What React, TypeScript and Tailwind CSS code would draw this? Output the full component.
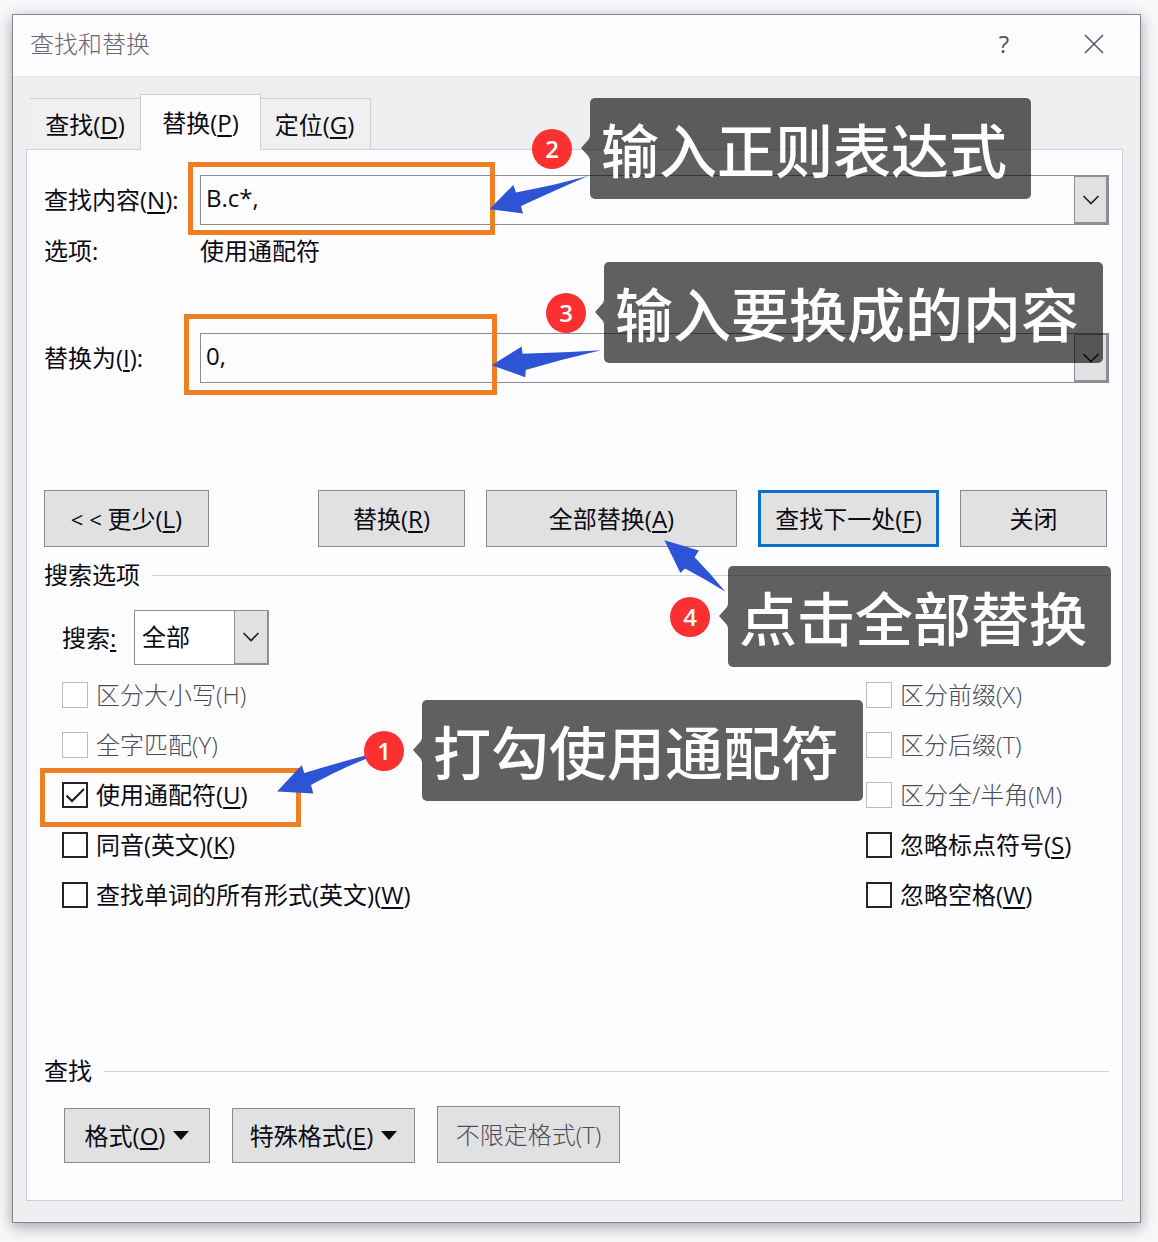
import { useState, type ReactNode } from "react";

function Key({ children }: { children: string }) {
  return (
    <>
      (<span className="underline decoration-2 underline-offset-[3px]">{children}</span>)
    </>
  );
}

function Chevron() {
  return (
    <svg viewBox="0 0 18 10" className="h-[10px] w-[18px]" fill="none" stroke="#222" strokeWidth="1.7">
      <path d="M1.5 1 9 8.5 16.5 1" />
    </svg>
  );
}

function Combo({ id, value }: { id: string; value: string }) {
  const [text, setText] = useState(value);
  return (
    <div className="flex h-[50px] w-full border border-[#8b8a97]">
      <input
        id={id}
        value={text}
        onChange={(e) => setText(e.target.value)}
        className="min-w-0 flex-1 bg-transparent pb-1 pl-[5px] text-[24px] outline-none"
      />
      <button
        type="button"
        aria-label="展开"
        className="flex w-[34px] items-center justify-center border border-r-2 border-b-2 border-[#8b8f98] bg-[#e1e1e2]"
      >
        <Chevron />
      </button>
    </div>
  );
}

function PushButton({ className, children, disabled }: { className: string; children: ReactNode; disabled?: boolean }) {
  return (
    <button
      type="button"
      disabled={disabled}
      className={`flex items-center justify-center gap-2 whitespace-pre bg-[#e1e1e2] disabled:font-light disabled:text-[#4e4a56] ${className}`}
    >
      {children}
    </button>
  );
}

function DownTriangle() {
  return (
    <svg viewBox="0 0 16 9" className="h-[9px] w-4">
      <path d="M0 0H16L8 9Z" fill="#0c0b14" />
    </svg>
  );
}

function Check({
  id,
  children,
  checked = false,
  disabled = false,
}: {
  id: string;
  children: ReactNode;
  checked?: boolean;
  disabled?: boolean;
}) {
  const [on, setOn] = useState(checked);
  return (
    <div className="flex h-[50px] items-center gap-2">
      <span className="relative flex">
        <input
          id={id}
          type="checkbox"
          checked={on}
          disabled={disabled}
          onChange={() => setOn(!on)}
          className="size-[26px] appearance-none border-2 border-[#25242c] bg-white disabled:border disabled:border-[#bcbac2]"
        />
        {on && (
          <svg
            viewBox="0 0 26 26"
            className="pointer-events-none absolute inset-0"
            fill="none"
            stroke="#1a1a22"
            strokeWidth="2"
          >
            <path d="M4.5 13.5 10 19 22 7" />
          </svg>
        )}
      </span>
      <label htmlFor={id} className={disabled ? "font-light whitespace-nowrap text-[#4e4a56]" : "whitespace-nowrap"}>
        {children}
      </label>
    </div>
  );
}

function GroupTitle({ className, children }: { className: string; children: string }) {
  return (
    <div className={`flex items-center gap-3 ${className}`}>
      <h2>{children}</h2>
      <span className="h-px flex-1 bg-[#cfd1dc]" />
    </div>
  );
}

function Note({ step, className, children }: { step: number; className: string; children: string }) {
  return (
    <div className={`pointer-events-none absolute z-20 flex w-max items-center gap-[18px] ${className}`}>
      <span className="flex size-10 items-center justify-center rounded-full bg-[#fb3030] text-[24px] leading-none font-semibold text-white">
        {step}
      </span>
      <span className="relative flex h-[101px] items-center rounded-[5px] bg-black/62 pt-1 pr-6 pl-[11px] text-[58px] leading-none font-medium whitespace-nowrap text-white">
        <svg viewBox="0 0 9 24" className="absolute top-[38px] -left-[9px] h-6 w-[9px]">
          <path d="M9 0 8 3 0 12 8 21 9 24Z" fill="#000" fillOpacity="0.62" />
        </svg>
        {children}
      </span>
    </div>
  );
}

function Frame({ className }: { className: string }) {
  return <span className={`pointer-events-none absolute z-10 border-[5px] border-[#ee7f24] ${className}`} />;
}

function Arrow({ className, box, d }: { className: string; box: string; d: string }) {
  return (
    <svg viewBox={box} className={`pointer-events-none absolute z-20 ${className}`}>
      <path d={d} fill="#2e54d6" />
    </svg>
  );
}

export default function App() {
  return (
    <main className="min-h-screen overflow-hidden bg-[#f8f8fa] pt-[14px] pr-[17px] pb-[18px] pl-3 font-['Open_Sans','Noto_Sans_CJK_SC',sans-serif] text-[24px] leading-7 text-[#0c0b14]">
      <section className="border border-[#85838b] bg-[#eeeff1] shadow-[0_4px_14px_rgba(0,0,0,0.35)]">
        <header className="flex h-[62px] items-center border-b border-[#e4e8ee] bg-[#fdfdff] pr-9 pb-[3px] pl-[17px] text-[#6c6672]">
          <h1 className="font-light">查找和替换</h1>
          <button type="button" aria-label="帮助" className="ml-auto w-5 text-center text-[#55505c]">
            ?
          </button>
          <button type="button" aria-label="关闭窗口" className="ml-[70px]">
            <svg viewBox="0 0 20 20" className="size-5" stroke="#55505c" strokeWidth="1.5">
              <path d="M1 1 19 19M19 1 1 19" />
            </svg>
          </button>
        </header>

        <div className="pt-[17px] pr-[17px] pb-[21px] pl-[13px]">
          <div role="tablist" className="flex items-end">
            <button
              type="button"
              role="tab"
              aria-selected="false"
              className="ml-1 h-[51px] w-[110px] border-t border-[#cdd0d2] bg-[#f0f0f1] pt-[2px] text-center"
            >
              查找<Key>D</Key>
            </button>
            <button
              type="button"
              role="tab"
              aria-selected="true"
              className="relative z-10 -mb-px h-[56px] w-[121px] border border-b-0 border-[#cdd0d2] bg-[#fdfdff] text-center"
            >
              替换<Key>P</Key>
            </button>
            <button
              type="button"
              role="tab"
              aria-selected="false"
              className="h-[51px] w-[110px] border-t border-r border-[#cdd0d2] bg-[#f0f0f1] pt-[2px] pr-[2px] text-center"
            >
              定位<Key>G</Key>
            </button>
          </div>

          <form
            className="border border-[#cdd0d8] bg-[#fdfdff] pt-[25px] pr-[13px] pb-[37px] pl-[17px]"
            onSubmit={(e) => e.preventDefault()}
          >
            <div className="relative grid grid-cols-[156px_1fr] items-center">
              <label htmlFor="find">
                查找内容<Key>N</Key>:
              </label>
              <Combo id="find" value="B.c*," />
              <Frame className="-top-[13px] left-[144px] h-[73px] w-[307px]" />
              <Arrow
                className="top-0 left-[445px] h-10 w-[100px]"
                box="489 175 100 40"
                d="M489.5 209.3 513.3 185 516 192.5Q552 186 588 176 556 190 521 206L523 213.5Z"
              />
              <Note step={2} className="-top-[77px] left-[488px]">
                输入正则表达式
              </Note>
            </div>

            <div className="mt-3 grid grid-cols-[156px_1fr]">
              <span>选项:</span>
              <span>使用通配符</span>
            </div>

            <div className="relative mt-[68px] grid grid-cols-[156px_1fr] items-center">
              <label htmlFor="replace">
                替换为<Key>I</Key>:
              </label>
              <Combo id="replace" value="0," />
              <Frame className="-top-[19px] left-[140px] h-[81px] w-[313px]" />
              <Arrow
                className="top-3 left-[447px] h-[34px] w-[112px]"
                box="491 345 112 34"
                d="M491.7 365.3 521.7 346.5 522.5 353.7Q562 353 601 350.3 563 359 525.7 370L525.3 377.3Z"
              />
              <Note step={3} className="-top-[71px] left-[502px]">
                输入要换成的内容
              </Note>
            </div>

            <div className="mt-[107px] flex gap-[21px] pr-[2px]">
              <PushButton className="mr-auto h-[57px] w-[165px] border border-[#8b8a94]">
                <span>
                  <span className="text-[22px] leading-none">{"< < "}</span>更少<Key>L</Key>
                </span>
              </PushButton>
              <PushButton className="h-[57px] w-[147px] border border-[#8b8a94]">
                <span>
                  替换<Key>R</Key>
                </span>
              </PushButton>
              <div className="relative">
                <PushButton className="h-[57px] w-[251px] border border-[#8b8a94]">
                  <span>
                    全部替换<Key>A</Key>
                  </span>
                </PushButton>
                <Arrow
                  className="top-[49px] left-[177px] h-[54px] w-[64px]"
                  box="663 539 64 54"
                  d="M664.4 540.3 699 550.5 694.6 557.3Q711 574 725.4 591.7 705 579 685 568.5L680.4 573Z"
                />
                <Note step={4} className="top-[76px] left-[184px]">
                  点击全部替换
                </Note>
              </div>
              <PushButton className="h-[57px] w-[181px] border-[3px] border-[#0b6fd0]">
                <span>
                  查找下一处<Key>F</Key>
                </span>
              </PushButton>
              <PushButton className="h-[57px] w-[147px] border border-[#8b8a94]">关闭</PushButton>
            </div>

            <GroupTitle className="mt-[14px]">搜索选项</GroupTitle>

            <div className="mt-[21px] ml-[18px] flex items-center">
              <label htmlFor="scope" className="w-[72px]">
                搜索<span className="underline decoration-2 underline-offset-[3px]">:</span>
              </label>
              <span className="relative flex">
                <select
                  id="scope"
                  defaultValue="全部"
                  className="h-[55px] w-[135px] appearance-none border border-[#8b8a97] bg-white pr-9 pb-[2px] pl-[7px]"
                >
                  <option>全部</option>
                  <option>向上</option>
                  <option>向下</option>
                </select>
                <span className="pointer-events-none absolute inset-y-0 right-0 flex w-[35px] items-center justify-center border border-r-2 border-b-2 border-[#8b8f98] bg-[#e1e1e2]">
                  <Chevron />
                </span>
              </span>
            </div>

            <div className="mt-[5px] ml-[18px] grid grid-cols-[1fr_243px]">
              <div>
                <Check id="case" disabled>
                  区分大小写(H)
                </Check>
                <Check id="whole" disabled>
                  全字匹配(Y)
                </Check>
                <div className="relative">
                  <Check id="wildcards" checked>
                    使用通配符<Key>U</Key>
                  </Check>
                  <Frame className="-top-[2px] -left-[22px] h-[59px] w-[261px]" />
                  <Arrow
                    className="-top-4 left-[214px] h-[42px] w-[92px]"
                    box="276 754 92 42"
                    d="M277 791.5 301.7 765.3 304.3 773Q334 764 367 755V758.5Q340 769 311 785L313.3 793.5Z"
                  />
                  <Note step={1} className="-top-[70px] left-[302px]">
                    打勾使用通配符
                  </Note>
                </div>
                <Check id="sounds">
                  同音(英文)<Key>K</Key>
                </Check>
                <Check id="forms">
                  查找单词的所有形式(英文)<Key>W</Key>
                </Check>
              </div>
              <div>
                <Check id="prefix" disabled>
                  区分前缀(X)
                </Check>
                <Check id="suffix" disabled>
                  区分后缀(T)
                </Check>
                <Check id="width" disabled>
                  区分全/半角(M)
                </Check>
                <Check id="punct">
                  忽略标点符号<Key>S</Key>
                </Check>
                <Check id="space">
                  忽略空格<Key>W</Key>
                </Check>
              </div>
            </div>

            <GroupTitle className="mt-[137px]">查找</GroupTitle>

            <div className="mt-[21px] ml-5 flex items-end gap-[22px]">
              <PushButton className="h-[55px] w-[146px] border border-[#8b8a94]">
                <span>
                  格式<Key>O</Key>
                </span>
                <DownTriangle />
              </PushButton>
              <PushButton className="h-[55px] w-[183px] border border-[#8b8a94]">
                <span>
                  特殊格式<Key>E</Key>
                </span>
                <DownTriangle />
              </PushButton>
              <PushButton disabled className="h-[57px] w-[183px] border border-[#8b8a94]">
                不限定格式(T)
              </PushButton>
            </div>
          </form>
        </div>
      </section>
    </main>
  );
}
